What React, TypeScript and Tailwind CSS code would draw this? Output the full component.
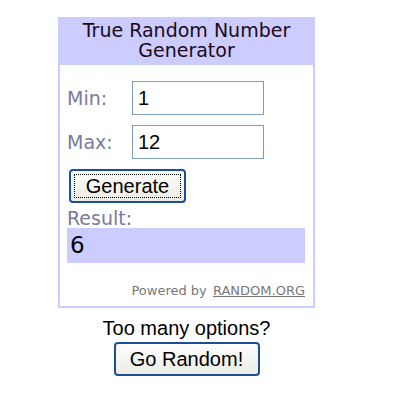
import React from 'react';

const verdana = "font-['DejaVu_Sans',Verdana,sans-serif]";
const arial = "font-['Liberation_Sans',Arial,sans-serif]";

const Field: React.FC<{ label: string; value: string }> = ({ label, value }) => (
  <div className="flex items-center h-[34px]">
    <span className={`${verdana} text-[19px] text-[#7a7a9a] w-[65px]`}>{label}</span>
    <div
      className={`${arial} w-[132px] h-[34px] border border-[#7f9db9] bg-white text-[20px] text-black pl-[5px] leading-[32px]`}
    >
      {value}
    </div>
  </div>
);

export default function App() {
  return (
    <div className="bg-white w-[400px] h-[400px] pt-[17px] pl-[58px]">
      <div className="w-[257px] border-2 border-[#ccccff] bg-white">
        <div className={`${verdana} bg-[#ccccff] text-center text-[19px] leading-[20px] text-[#1a0a1a] pt-[1px] pb-[5px]`}>
          True Random Number
          <br />
          Generator
        </div>
        <div className="px-[7px] pt-[16px] pb-[7px]">
          <div className="flex flex-col gap-[10px]">
            <Field label="Min:" value="1" />
            <Field label="Max:" value="12" />
          </div>
          <button
            className={`${arial} mt-[10px] ml-[2px] w-[117px] h-[34px] rounded-[4px] border-2 border-[#1c4f93] bg-gradient-to-b from-[#fefefe] to-[#ecebe3] p-[3px] text-[20px] text-black`}
          >
            <span className="flex items-center justify-center h-full border border-dotted border-black">Generate</span>
          </button>
          <div className={`${verdana} text-[19px] text-[#7a7a9a] leading-[20px] mt-[5px]`}>Result:</div>
          <div className={`${verdana} bg-[#ccccff] h-[35px] text-[23px] leading-[35px] text-black pl-[3px] mr-[1px]`}>6</div>
          <div className={`${verdana} text-right text-[13px] leading-[16px] text-[#777777] mt-[20px] mr-[1px]`}>
            Powered by <span className="underline ml-[2px]">RANDOM.ORG</span>
          </div>
        </div>
      </div>
      <div className="w-[257px] flex flex-col items-center mt-[9px]">
        <div className={`${arial} text-[20px] leading-[22px] text-black`}>Too many options?</div>
        <button
          className={`${arial} mt-[3px] w-[146px] h-[34px] rounded-[4px] border-2 border-[#1c4f93] bg-gradient-to-b from-[#fefefe] to-[#ecebe3] text-[20px] text-black`}
        >
          Go Random!
        </button>
      </div>
    </div>
  );
}
